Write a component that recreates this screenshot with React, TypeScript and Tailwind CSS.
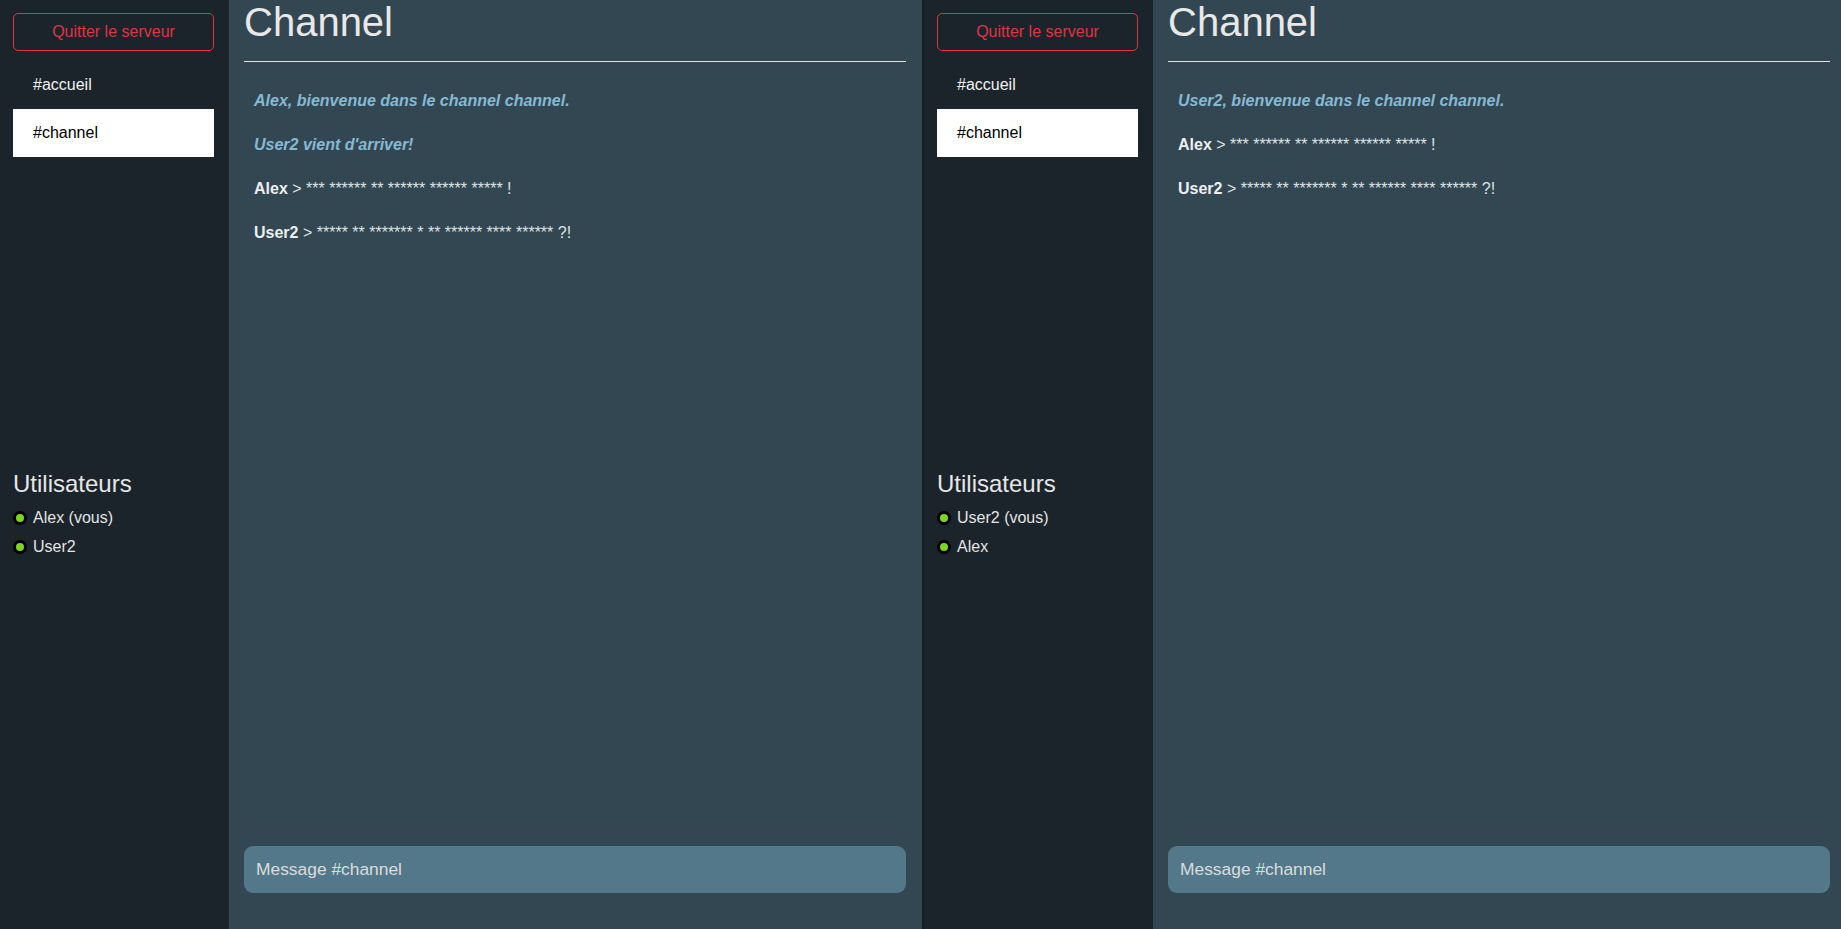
import React from "react";

type Msg =
  | { kind: "info"; text: string }
  | { kind: "chat"; user: string; text: string };

type PanelProps = {
  me: string;
  users: string[];
  messages: Msg[];
  second?: boolean;
};

const channels = ["#accueil", "#channel"];
const active = "#channel";

function UserDot() {
  return (
    <span className="inline-flex items-center justify-center w-[14px] h-[14px] rounded-full bg-black shrink-0">
      <span className="block w-[8px] h-[8px] rounded-full bg-[#7fd41f]" />
    </span>
  );
}

function Sidebar({ me, users }: { me: string; users: string[] }) {
  return (
    <aside className="w-[229px] shrink-0 h-full bg-[#1c242b] flex flex-col pl-[13px] pr-[15px]">
      {/* Channels */}
      <div className="flex-1 pt-[13px]">
        <button className="w-full h-[38px] rounded-[5px] border border-[#dc3545] text-[#dc3545] text-base">
          Quitter le serveur
        </button>
        <ul className="mt-[10px]">
          {channels.map((c) => (
            <li
              key={c}
              className={`h-[48px] flex items-center pl-[20px] text-base ${
                c === active ? "bg-white text-black" : "text-[#f1f1f1]"
              }`}
            >
              {c}
            </li>
          ))}
        </ul>
      </div>

      {/* Users */}
      <div className="flex-1 -mt-[5px]">
        <h4 className="text-[24px] leading-[29px] text-[#e6e6e6] mb-[6px]">Utilisateurs</h4>
        <ul>
          {users.map((u) => (
            <li key={u} className="h-[29px] flex items-center gap-[6px] text-base text-[#e3e3e3]">
              <UserDot />
              <span>{u === me ? `${u} (vous)` : u}</span>
            </li>
          ))}
        </ul>
      </div>
    </aside>
  );
}

function Panel({ me, users, messages, second }: PanelProps) {
  return (
    <div
      className={`h-full flex min-w-0 ${
        second ? "flex-1 border-l-2 border-[#161d22]" : "w-[922px] shrink-0"
      }`}
    >
      <Sidebar me={me} users={users} />
      <main
        className={`flex-1 min-w-0 h-full bg-[#334752] flex flex-col pl-[15px] pb-9 ${
          second ? "pr-[11px]" : "pr-4"
        }`}
      >
        <h1 className="text-[40px] leading-[44px] text-[#e8e8e8]">Channel</h1>
        <hr className="mt-[17px] border-0 h-px bg-[#e2e2e2]" />
        <div className="flex-1 mt-[17px]">
          {messages.map((m, i) =>
            m.kind === "info" ? (
              <div key={i} className="px-[10px] py-[10px] leading-6 italic font-bold text-[#86b9d3]">
                {m.text}
              </div>
            ) : (
              <div key={i} className="px-[10px] py-[10px] leading-6 text-[#dfe3e6]">
                <span className="font-bold text-[#eceff1]">{m.user}</span> &gt; {m.text}
              </div>
            )
          )}
        </div>
        <input
          className="w-full h-[47px] rounded-[9px] bg-[#53788a] px-3 text-[17.4px] text-[#e6e6e6] placeholder:text-[#dcdcdc] outline-none"
          placeholder="Message #channel"
        />
      </main>
    </div>
  );
}

export default function App() {
  return (
    <div
      className="w-[1841px] h-[929px] flex overflow-hidden"
      style={{ fontFamily: '"Liberation Sans", Arial, sans-serif' }}
    >
      <Panel
        me="Alex"
        users={["Alex", "User2"]}
        messages={[
          { kind: "info", text: "Alex, bienvenue dans le channel channel." },
          { kind: "info", text: "User2 vient d'arriver!" },
          { kind: "chat", user: "Alex", text: "*** ****** ** ****** ****** ***** !" },
          { kind: "chat", user: "User2", text: "***** ** ******* * ** ****** **** ****** ?!" },
        ]}
      />
      <Panel
        second
        me="User2"
        users={["User2", "Alex"]}
        messages={[
          { kind: "info", text: "User2, bienvenue dans le channel channel." },
          { kind: "chat", user: "Alex", text: "*** ****** ** ****** ****** ***** !" },
          { kind: "chat", user: "User2", text: "***** ** ******* * ** ****** **** ****** ?!" },
        ]}
      />
    </div>
  );
}
